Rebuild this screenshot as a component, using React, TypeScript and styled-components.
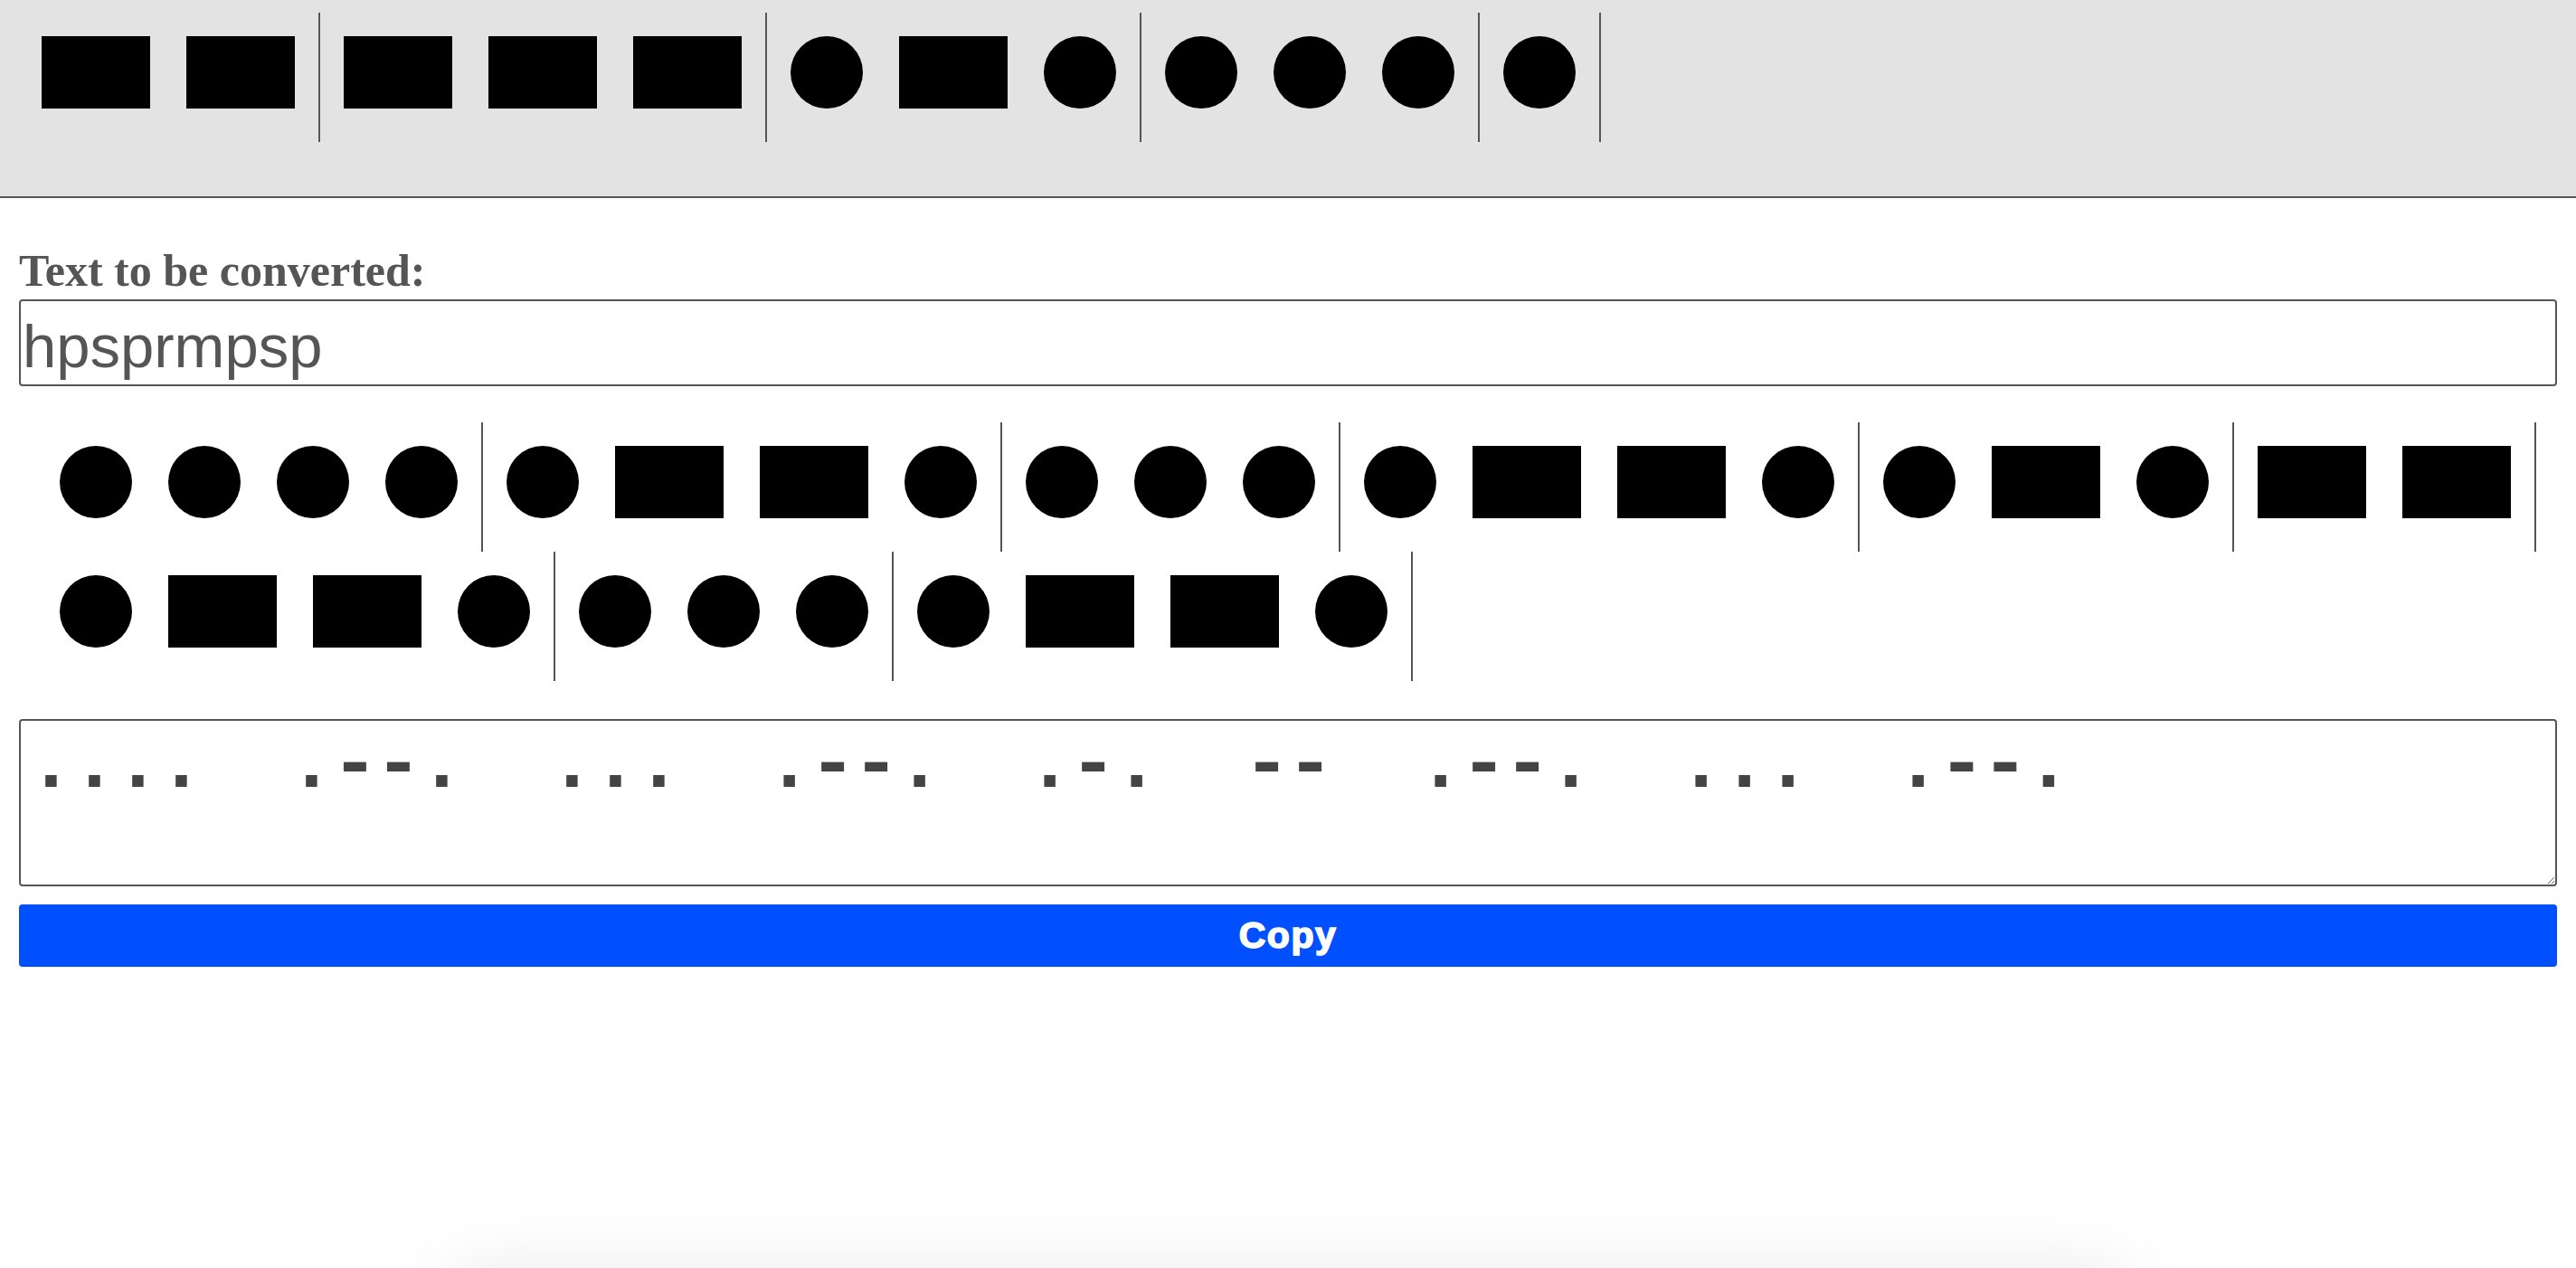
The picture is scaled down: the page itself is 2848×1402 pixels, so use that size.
import React from "react";
import styled, { createGlobalStyle } from "styled-components";

const MORSE: Record<string, string> = {
  a: ".-", b: "-...", c: "-.-.", d: "-..", e: ".", f: "..-.", g: "--.", h: "....",
  i: "..", j: ".---", k: "-.-", l: ".-..", m: "--", n: "-.", o: "---", p: ".--.",
  q: "--.-", r: ".-.", s: "...", t: "-", u: "..-", v: "...-", w: ".--", x: "-..-",
  y: "-.--", z: "--..",
};

const toMorse = (text: string) =>
  text
    .toLowerCase()
    .split("")
    .map((c) => MORSE[c] ?? "")
    .filter(Boolean);

const GlobalStyle = createGlobalStyle`
  html, body {
    margin: 0;
    padding: 0;
    background: #ffffff;
  }
  body {
    font-family: "Liberation Sans", Arial, sans-serif;
    overflow: hidden;
  }
`;

const TopBar = styled.header`
  box-sizing: border-box;
  height: 219px;
  padding: 14px 20px 0 20px;
  background: #e3e3e3;
  border-bottom: 2px solid #555555;
`;

const SymbolRow = styled.div`
  display: flex;
  flex-wrap: wrap;
  align-items: flex-start;
`;

const Letter = styled.div`
  display: flex;
  align-items: flex-start;
  padding: 26px 6px 37px;
  border-right: 2px solid #555555;
`;

const Dot = styled.span`
  display: block;
  flex: none;
  width: 80px;
  height: 80px;
  margin: 0 20px;
  border-radius: 50%;
  background: #000000;
`;

const Dash = styled.span`
  display: block;
  flex: none;
  width: 120px;
  height: 80px;
  margin: 0 20px;
  background: #000000;
`;

const Main = styled.main`
  padding: 53px 21px 0;
`;

const Label = styled.label`
  display: block;
  margin-bottom: 4px;
  font-family: "Liberation Serif", "Times New Roman", serif;
  font-weight: bold;
  font-size: 50px;
  line-height: 55px;
  color: #555555;
`;

const TextInput = styled.input`
  display: block;
  box-sizing: border-box;
  width: 100%;
  height: 96px;
  margin: 0;
  padding: 6px 2px 0;
  border: 2px solid #555555;
  border-radius: 4px;
  font-family: "Liberation Sans", Arial, sans-serif;
  font-size: 67px;
  color: #555555;
  background: #ffffff;
  outline: none;
`;

const Display = styled(SymbolRow)`
  margin-top: 40px;
  padding: 0 19px;
`;

const Output = styled.textarea`
  display: block;
  box-sizing: border-box;
  width: 100%;
  height: 185px;
  margin: 42px 0 0;
  padding: 0 7px;
  border: 2px solid #555555;
  border-radius: 4px;
  font-family: "Liberation Mono", "Courier New", monospace;
  font-weight: bold;
  font-size: 88px;
  letter-spacing: -4.8px;
  line-height: normal;
  color: #444444;
  background: #ffffff;
  outline: none;
  white-space: pre-wrap;
`;

const CopyButton = styled.button`
  display: block;
  box-sizing: border-box;
  width: 100%;
  height: 69px;
  margin-top: 20px;
  padding: 0;
  border: none;
  border-radius: 4px;
  background: #0050ff;
  color: #ffffff;
  font-family: "Liberation Sans", Arial, sans-serif;
  font-weight: bold;
  font-size: 41px;
  letter-spacing: 1.5px;
  -webkit-text-stroke: 1.6px #ffffff;
  cursor: pointer;
`;

const Toast = styled.div`
  position: fixed;
  left: 50%;
  bottom: -200px;
  width: 1840px;
  height: 180px;
  transform: translateX(-50%);
  background: #ffffff;
  border-radius: 8px;
  box-shadow: 0 0 90px rgba(0, 0, 0, 0.14);
`;

const MorseLetters: React.FC<{ codes: string[] }> = ({ codes }) => (
  <>
    {codes.map((code, i) => (
      <Letter key={i}>
        {code.split("").map((s, j) => (s === "." ? <Dot key={j} /> : <Dash key={j} />))}
      </Letter>
    ))}
  </>
);

export default function App() {
  const text = "hpsprmpsp";
  const codes = toMorse(text);
  return (
    <>
      <GlobalStyle />
      <TopBar>
        <SymbolRow>
          <MorseLetters codes={toMorse("morse")} />
        </SymbolRow>
      </TopBar>
      <Main>
        <Label htmlFor="source">Text to be converted:</Label>
        <TextInput id="source" type="text" defaultValue={text} />
        <Display>
          <MorseLetters codes={codes} />
        </Display>
        <Output readOnly value={codes.join("  ")} />
        <CopyButton type="button">Copy</CopyButton>
      </Main>
      <Toast />
    </>
  );
}
